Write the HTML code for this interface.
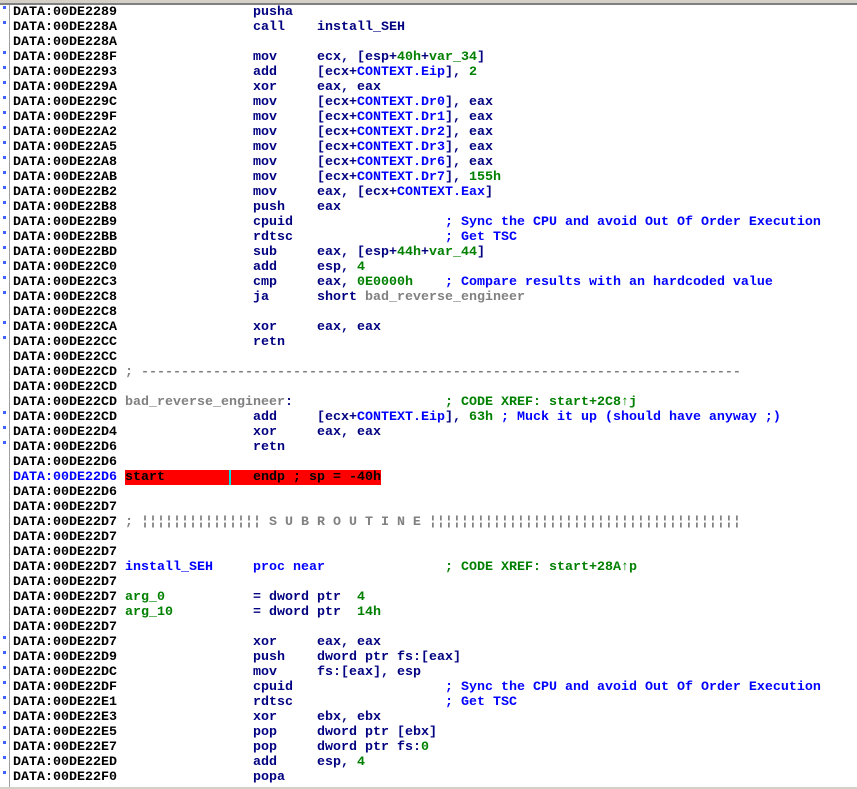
<!DOCTYPE html>
<html><head><meta charset="utf-8"><style>
html,body{margin:0;padding:0;background:#fff;width:857px;height:789px;overflow:hidden;position:relative}
.top{position:absolute;left:0;top:0;width:857px;height:3px;background:#d4d0c8;border-bottom:2px solid #808080}
.lb{position:absolute;left:9px;top:5px;width:1px;height:784px;background:#a0a0a0}
.bot{position:absolute;left:0;top:787px;width:857px;height:2px;background:#d4d0c8}
.r{position:absolute;left:0;height:15px;width:857px;font:bold 13.33px/15px "Liberation Mono",monospace;white-space:pre;color:#000}
.r span{position:absolute;top:0}
.a{left:13px}.l{left:125px}.m{left:253px;color:#000080}.o{left:317px;color:#000080}.c{left:445px}
.d{position:absolute;left:3px;top:1px;width:3px;height:3px;background:#4060ff}
.g{color:#008000}.b{color:#0000ff}.n{color:#000080}.y{color:#808080}
.hl{position:absolute;left:125px;width:256px;height:15px;background:#ff0000}
.cur{position:absolute;left:229px;width:2px;height:15px;background:#00e0e0}
</style></head><body>
<div class="top"></div><div class="lb"></div><div class="bot"></div>

<div class="r" style="top:5px"><i class="d"></i><span class="a">DATA:00DE2289</span><span class="m">pusha</span></div>
<div class="r" style="top:20px"><i class="d"></i><span class="a">DATA:00DE228A</span><span class="m">call</span><span class="o">install_SEH</span></div>
<div class="r" style="top:35px"><span class="a">DATA:00DE228A</span></div>
<div class="r" style="top:50px"><i class="d"></i><span class="a">DATA:00DE228F</span><span class="m">mov</span><span class="o">ecx, [esp+<b class="g">40h</b>+<b class="g">var_34</b>]</span></div>
<div class="r" style="top:65px"><i class="d"></i><span class="a">DATA:00DE2293</span><span class="m">add</span><span class="o">[ecx+<b class="b">CONTEXT.Eip</b>], <b class="g">2</b></span></div>
<div class="r" style="top:80px"><i class="d"></i><span class="a">DATA:00DE229A</span><span class="m">xor</span><span class="o">eax, eax</span></div>
<div class="r" style="top:95px"><i class="d"></i><span class="a">DATA:00DE229C</span><span class="m">mov</span><span class="o">[ecx+<b class="b">CONTEXT.Dr0</b>], eax</span></div>
<div class="r" style="top:110px"><i class="d"></i><span class="a">DATA:00DE229F</span><span class="m">mov</span><span class="o">[ecx+<b class="b">CONTEXT.Dr1</b>], eax</span></div>
<div class="r" style="top:125px"><i class="d"></i><span class="a">DATA:00DE22A2</span><span class="m">mov</span><span class="o">[ecx+<b class="b">CONTEXT.Dr2</b>], eax</span></div>
<div class="r" style="top:140px"><i class="d"></i><span class="a">DATA:00DE22A5</span><span class="m">mov</span><span class="o">[ecx+<b class="b">CONTEXT.Dr3</b>], eax</span></div>
<div class="r" style="top:155px"><i class="d"></i><span class="a">DATA:00DE22A8</span><span class="m">mov</span><span class="o">[ecx+<b class="b">CONTEXT.Dr6</b>], eax</span></div>
<div class="r" style="top:170px"><i class="d"></i><span class="a">DATA:00DE22AB</span><span class="m">mov</span><span class="o">[ecx+<b class="b">CONTEXT.Dr7</b>], <b class="g">155h</b></span></div>
<div class="r" style="top:185px"><i class="d"></i><span class="a">DATA:00DE22B2</span><span class="m">mov</span><span class="o">eax, [ecx+<b class="b">CONTEXT.Eax</b>]</span></div>
<div class="r" style="top:200px"><i class="d"></i><span class="a">DATA:00DE22B8</span><span class="m">push</span><span class="o">eax</span></div>
<div class="r" style="top:215px"><i class="d"></i><span class="a">DATA:00DE22B9</span><span class="m">cpuid</span><span class="c b">; Sync the CPU and avoid Out Of Order Execution</span></div>
<div class="r" style="top:230px"><i class="d"></i><span class="a">DATA:00DE22BB</span><span class="m">rdtsc</span><span class="c b">; Get TSC</span></div>
<div class="r" style="top:245px"><i class="d"></i><span class="a">DATA:00DE22BD</span><span class="m">sub</span><span class="o">eax, [esp+<b class="g">44h</b>+<b class="g">var_44</b>]</span></div>
<div class="r" style="top:260px"><i class="d"></i><span class="a">DATA:00DE22C0</span><span class="m">add</span><span class="o">esp, <b class="g">4</b></span></div>
<div class="r" style="top:275px"><i class="d"></i><span class="a">DATA:00DE22C3</span><span class="m">cmp</span><span class="o">eax, <b class="g">0E0000h</b></span><span class="c b">; Compare results with an hardcoded value</span></div>
<div class="r" style="top:290px"><i class="d"></i><span class="a">DATA:00DE22C8</span><span class="m">ja</span><span class="o">short <b class="y">bad_reverse_engineer</b></span></div>
<div class="r" style="top:305px"><span class="a">DATA:00DE22C8</span></div>
<div class="r" style="top:320px"><i class="d"></i><span class="a">DATA:00DE22CA</span><span class="m">xor</span><span class="o">eax, eax</span></div>
<div class="r" style="top:335px"><i class="d"></i><span class="a">DATA:00DE22CC</span><span class="m">retn</span></div>
<div class="r" style="top:350px"><span class="a">DATA:00DE22CC</span></div>
<div class="r" style="top:365px"><span class="a">DATA:00DE22CD</span><span class="l y">; ---------------------------------------------------------------------------</span></div>
<div class="r" style="top:380px"><span class="a">DATA:00DE22CD</span></div>
<div class="r" style="top:395px"><span class="a">DATA:00DE22CD</span><span class="l"><b class="y">bad_reverse_engineer</b><b class="n">:</b></span><span class="c g">; CODE XREF: start+2C8↑j</span></div>
<div class="r" style="top:410px"><i class="d"></i><span class="a">DATA:00DE22CD</span><span class="m">add</span><span class="o">[ecx+<b class="b">CONTEXT.Eip</b>], <b class="g">63h</b> <b class="b">; Muck it up (should have anyway ;)</b></span></div>
<div class="r" style="top:425px"><i class="d"></i><span class="a">DATA:00DE22D4</span><span class="m">xor</span><span class="o">eax, eax</span></div>
<div class="r" style="top:440px"><i class="d"></i><span class="a">DATA:00DE22D6</span><span class="m">retn</span></div>
<div class="r" style="top:455px"><span class="a">DATA:00DE22D6</span></div>
<div class="r" style="top:470px"><i class="hl"></i><i class="cur"></i><span class="a b">DATA:00DE22D6</span><span class="l">start</span><span class="m" style="color:#000">endp ; sp = -40h</span></div>
<div class="r" style="top:485px"><span class="a">DATA:00DE22D6</span></div>
<div class="r" style="top:500px"><span class="a">DATA:00DE22D7</span></div>
<div class="r" style="top:515px"><span class="a">DATA:00DE22D7</span><span class="l y" style="left:125px">; ¦¦¦¦¦¦¦¦¦¦¦¦¦¦¦ S U B R O U T I N E ¦¦¦¦¦¦¦¦¦¦¦¦¦¦¦¦¦¦¦¦¦¦¦¦¦¦¦¦¦¦¦¦¦¦¦¦¦¦¦</span></div>
<div class="r" style="top:530px"><span class="a">DATA:00DE22D7</span></div>
<div class="r" style="top:545px"><span class="a">DATA:00DE22D7</span></div>
<div class="r" style="top:560px"><span class="a">DATA:00DE22D7</span><span class="l b">install_SEH</span><span class="m" style="color:#0000ff">proc near</span><span class="c g">; CODE XREF: start+28A↑p</span></div>
<div class="r" style="top:575px"><span class="a">DATA:00DE22D7</span></div>
<div class="r" style="top:590px"><span class="a">DATA:00DE22D7</span><span class="l g">arg_0</span><span class="m">= dword ptr  <b class="g">4</b></span></div>
<div class="r" style="top:605px"><span class="a">DATA:00DE22D7</span><span class="l g">arg_10</span><span class="m">= dword ptr  <b class="g">14h</b></span></div>
<div class="r" style="top:620px"><span class="a">DATA:00DE22D7</span></div>
<div class="r" style="top:635px"><i class="d"></i><span class="a">DATA:00DE22D7</span><span class="m">xor</span><span class="o">eax, eax</span></div>
<div class="r" style="top:650px"><i class="d"></i><span class="a">DATA:00DE22D9</span><span class="m">push</span><span class="o">dword ptr fs:[eax]</span></div>
<div class="r" style="top:665px"><i class="d"></i><span class="a">DATA:00DE22DC</span><span class="m">mov</span><span class="o">fs:[eax], esp</span></div>
<div class="r" style="top:680px"><i class="d"></i><span class="a">DATA:00DE22DF</span><span class="m">cpuid</span><span class="c b">; Sync the CPU and avoid Out Of Order Execution</span></div>
<div class="r" style="top:695px"><i class="d"></i><span class="a">DATA:00DE22E1</span><span class="m">rdtsc</span><span class="c b">; Get TSC</span></div>
<div class="r" style="top:710px"><i class="d"></i><span class="a">DATA:00DE22E3</span><span class="m">xor</span><span class="o">ebx, ebx</span></div>
<div class="r" style="top:725px"><i class="d"></i><span class="a">DATA:00DE22E5</span><span class="m">pop</span><span class="o">dword ptr [ebx]</span></div>
<div class="r" style="top:740px"><i class="d"></i><span class="a">DATA:00DE22E7</span><span class="m">pop</span><span class="o">dword ptr fs:<b class="g">0</b></span></div>
<div class="r" style="top:755px"><i class="d"></i><span class="a">DATA:00DE22ED</span><span class="m">add</span><span class="o">esp, <b class="g">4</b></span></div>
<div class="r" style="top:770px"><i class="d"></i><span class="a">DATA:00DE22F0</span><span class="m">popa</span></div>
</body></html>
